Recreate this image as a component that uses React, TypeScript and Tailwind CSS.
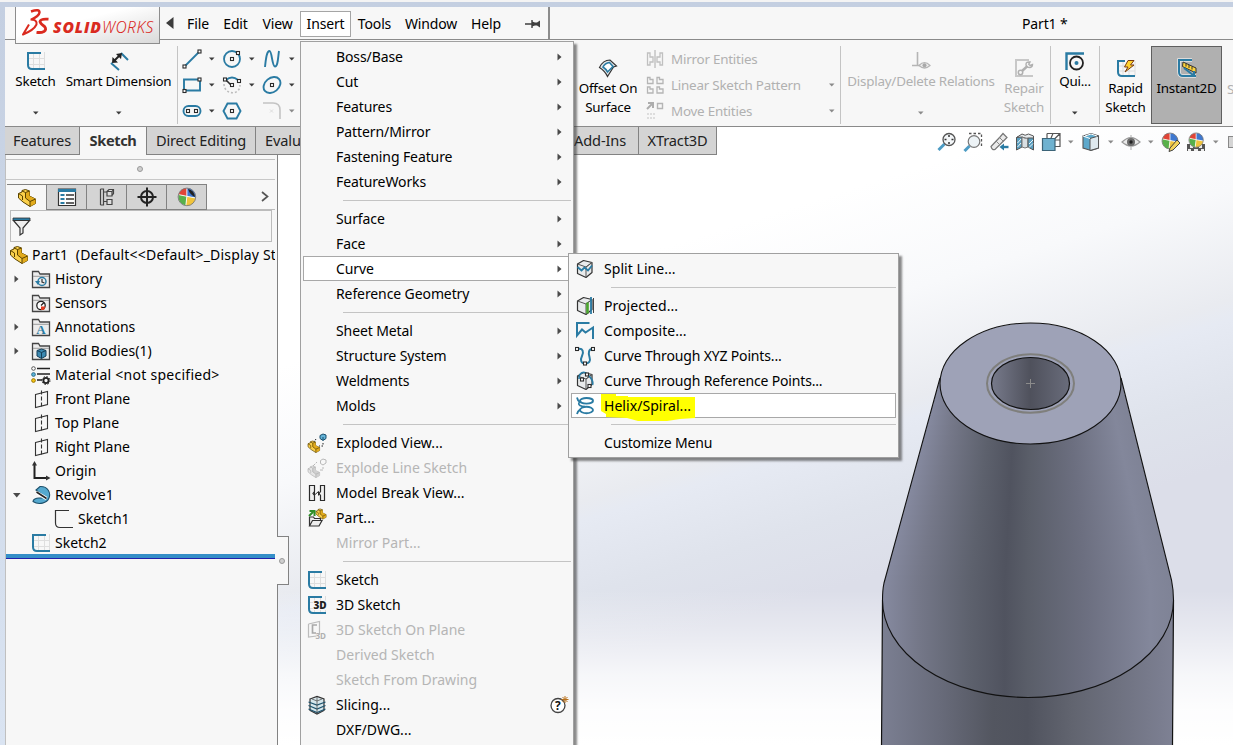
import React from "react";

type Kids = { children?: React.ReactNode };

const BLUE = "#2a7ba3";
const DARK = "#2b2b2b";

/* ---------- shared bits ---------- */

function Ico({ s = 20, children, className = "" }: Kids & { s?: number; className?: string }) {
  return (
    <svg width={s} height={s} viewBox="0 0 20 20" fill="none" className={`shrink-0 ${className}`}>
      {children}
    </svg>
  );
}

function Down({ dim = false, className = "" }: { dim?: boolean; className?: string }) {
  return (
    <svg width="6" height="4" viewBox="0 0 6 4" className={`shrink-0 ${className}`}>
      <path d="M0 0.5h5.500L2.750 3.500z" fill={dim ? "#8a8a8a" : "#3c3c3c"} />
    </svg>
  );
}

function Right({ className = "" }: { className?: string }) {
  return (
    <svg width="5" height="8" viewBox="0 0 5 8" className={`shrink-0 ${className}`}>
      <path d="M0.500 0.500v7L4.500 4z" fill="#4a4a4a" />
    </svg>
  );
}

const Sq = ({ x, y, c = DARK, f = "#fff" }: { x: number; y: number; c?: string; f?: string }) => (
  <rect x={x - 1.5} y={y - 1.5} width="3" height="3" fill={f} stroke={c} strokeWidth="1.1" />
);

/* ---------- icons ---------- */

function SketchIcon({ label = false }: { label?: boolean }) {
  return (
    <Ico>
      <path d="M7.500 1v18M13.500 1v18M18.500 1v18M1 7.500h18M1 13.500h18" stroke="#dedede" />
      <path d="M15 2H2v12q0 4 4 4h13" stroke={BLUE} strokeWidth="2" />
      {label && (
        <>
          <rect x="6" y="5.500" width="14" height="9.500" fill="#f7f7f7" />
          <text x="6.500" y="14" fontSize="10" fontWeight="800" letterSpacing="0" fill="#222" fontFamily="Open Sans, sans-serif">3D</text>
        </>
      )}
    </Ico>
  );
}

const Cube = ({ t = 0, u = 0, k = 1, a = "#fbd04a", b = "#e2ab1c", c = "#5a4300" }) => (
  <g transform={`translate(${t} ${u}) scale(${k})`} stroke={c} strokeWidth="1" strokeLinejoin="round">
    <path d="M1.500 10V5.500L5 4V2.500L8.500 1.500l4 1.500v5l6 3v4.500l-5.500 3-7-4.500z" fill={a} />
    <path d="M12.500 3v5l6 3v4.500l-5.500 3v-5L8 10V5z" fill={b} stroke="none" />
    <path d="M5 3l3.500 1.500 4-1.500M8.500 4.500V10l4.500 3.500 5.500-2.500M13 13.500v5M1.500 5.500l4 2.500V12" fill="none" />
  </g>
);

const PartIcon = () => <Ico><Cube /></Ico>;

const Folder = ({ children }: Kids) => (
  <Ico>
    <path d="M1.500 18.500V2.500h6l1.500 2.500h9.500v13.500z" fill="#ececec" stroke="#444" strokeWidth="1.300" />
    <path d="M2 7.300h16" stroke="#888" strokeWidth=".8" />
    {children}
  </Ico>
);

const PlaneIcon = () => (
  <Ico>
    <path d="M4.500 5.500l12-3v13l-12 3z" stroke="#333" strokeWidth="1.100" />
    <path d="M10.500 1.500v18" stroke="#333" strokeDasharray="4 2" strokeWidth="1.100" />
  </Ico>
);

const BoxIcon = ({ children }: Kids) => (
  <Ico>
    <path d="M2.500 5l6-3.500 8.500 2v10L11 18.500l-8.500-4z" fill="#e9ebec" stroke="#333" strokeWidth="1.200" strokeLinejoin="round" />
    <path d="M2.500 5L11 8l6-4.500L11 8v10.500" stroke="#555" strokeWidth="1" />
    {children}
  </Ico>
);

const icons: Record<string, React.ReactNode> = {
  split: (
    <BoxIcon>
      <path d="M2.500 8l4 3.500 3-3 3.500 3 4-5" stroke={BLUE} strokeWidth="1.800" />
    </BoxIcon>
  ),
  projected: (
    <BoxIcon>
      <path d="M12.500 6.500v11" stroke="#4aa52c" strokeWidth="2.600" />
      <path d="M16 1v17" stroke={BLUE} strokeWidth="1.800" />
      <path d="M18.500 2v15" stroke="#444" />
    </BoxIcon>
  ),
  composite: <Ico><path d="M14.500 2H2v12.500L7 8.500l3.500 3L18 6.500V18" stroke={BLUE} strokeWidth="2" /></Ico>,
  xyz: (
    <Ico>
      <path d="M3 3c5-1 6 3 4 7s-1 7.500 3 7.500 6-2 4.500-6.500S14 3 17 3" stroke={BLUE} strokeWidth="2" />
      <Sq x={2} y={3} /><Sq x={18} y={3} /><Sq x={10} y={17.5} />
    </Ico>
  ),
  ref: (
    <BoxIcon>
      <path d="M4 8C4 1 9 0 12 3s7 6 5.500 11" stroke={BLUE} strokeWidth="1.600" />
      <Sq x={7} y={8.500} /><Sq x={12} y={3.500} /><Sq x={14.5} y={15} />
    </BoxIcon>
  ),
  helix: (
    <Ico>
      <path d="M2 1.500q.5 3 3 4.500M2 18q.5-2.500 3-4.500" stroke={BLUE} strokeWidth="1.800" />
      <ellipse cx="11.500" cy="4.800" rx="6.500" ry="2.800" stroke={BLUE} strokeWidth="1.900" />
      <path d="M5 5.500Q2.500 8 5 9.500q1.500 1 5 1" stroke={BLUE} strokeWidth="1.700" />
      <ellipse cx="11.500" cy="14" rx="6.500" ry="3.200" stroke={BLUE} strokeWidth="1.900" />
    </Ico>
  ),
  exploded: (
    <Ico>
      <Cube u={7} k={0.68} />
      <path d="M13 2.500l3-1.500 3 1v3.500l-3 2-3-2zM16 4v3" fill="#63b3d8" stroke="#194f6d" />
      <path d="M9 6l-2 3M16 10v3h-4" stroke="#222" strokeDasharray="1.500 1.500" />
    </Ico>
  ),
  explodeLine: (
    <Ico>
      <Cube u={7} k={0.68} a="#e6e6e6" b="#d0d0d0" c="#b0b0b0" />
      <path d="M13.500 2.500l2.500-1.500 3 1v3l-3 2-2.500-1.500z" stroke="#b8b8b8" />
      <path d="M6 8l4-4M13 12h3V9" stroke="#b8b8b8" strokeDasharray="3 1" />
    </Ico>
  ),
  modelBreak: (
    <Ico>
      <path d="M2.500 2.500h5v6l-1.500 2 1.500 2v5h-5zM17.500 2.500h-4v6l-1.500 2 1.500 2v5h4z" stroke={DARK} strokeWidth="1.200" fill="#f0f0f0" />
      <path d="M7.500 8.500v3.500l4-3.500v4" stroke={DARK} />
    </Ico>
  ),
  part: (
    <Ico>
      <path d="M2.500 18V9h4l1 1.500h6V13M2.500 18l3-5.500H15L12 18z" fill="#eee" stroke="#333" strokeWidth="1.200" />
      <Cube t={8} u={0} k={0.6} />
      <path d="M2 8l4-4M2.500 3h5v5" stroke="#2f8f28" strokeWidth="2" />
    </Ico>
  ),
  sketch: <SketchIcon />,
  sketch3d: <SketchIcon label />,
  onPlane: (
    <Ico>
      <path d="M1.500 4l11-2.500v13M1.500 4v13l8-1" stroke="#bcbcbc" strokeWidth="1.200" />
      <path d="M10 5H5.500v8H9" stroke="#a9a9a9" strokeWidth="1.700" />
      <text x="8.500" y="19" fontSize="8" fontWeight="700" fill="#b0b0b0" fontFamily="Open Sans, sans-serif">3D</text>
    </Ico>
  ),
  slicing: (
    <Ico>
      <path d="M3 4l7-2.500L17 4v11.500L10 19l-7-3.500z" fill="#d6e6ec" stroke="#333" strokeWidth="1.200" />
      <path d="M1.500 7l8.500 3 8.500-3M1.500 10.500L10 14l8.500-3.500M1.500 14l8.500 3.500 8.500-3.500" stroke="#1e536d" strokeWidth="1.200" />
      <path d="M5 4l5 2 5-2M10 2v16" stroke="#555" strokeWidth=".8" />
    </Ico>
  ),
};

/* ---------- title / menu bar ---------- */

function Logo() {
  return (
    <div className="absolute left-[10px] top-0 z-20 flex h-[37px] w-[145px] items-start border border-t-0 border-[#8d8d8d] bg-linear-to-br from-white from-40% to-[#dadada]">
      <svg width="29" height="30" viewBox="0 0 29 30" fill="none" className="ml-[5px] mt-px shrink-0">
        <path d="M10 3.500Q18.500.5 18.500 4.500 18 8 10.500 11.500" stroke="#da2a1f" strokeWidth="2.400" />
        <path d="M9.500 11.500Q16.500 11.500 15.500 16.500 13 22 2 26.500L8 16.500" stroke="#da2a1f" strokeWidth="2" strokeLinejoin="round" />
        <path d="M27.500 11.200Q19.500 10.500 19 13.500q.2 2 4.500 5 2.500 3-.5 5-3 1.500-7.500.8" stroke="#da2a1f" strokeWidth="2.800" />
      </svg>
      <div className="mt-[9px] ml-[3px] flex text-[15.600px] leading-[22px] text-[#da2a1f] italic">
        <span className="w-[49px] font-['Open_Sans',sans-serif] font-extrabold tracking-[0.9px]">SOLID</span>
        <span className="font-light tracking-[0.45px]">WORKS</span>
      </div>
    </div>
  );
}

const menus: [string, string][] = [
  ["File", "w-9"], ["Edit", "w-[39px]"], ["View", "w-[45px]"], ["Insert", "w-[51px]"],
  ["Tools", "w-[47px]"], ["Window", "w-[66px]"], ["Help", "w-[44px]"],
];

function MenuBar() {
  return (
    <header className="relative flex h-[33px] border-b border-[#8a8a8a] bg-[#f7f7f7]">
      <Logo />
      <div className="flex h-8 w-[545px] items-center border-r-2 border-[#8c8c8c] pl-[161px]">
        <svg width="8" height="12" viewBox="0 0 8 12"><path d="M7.500 0v12L0 6z" fill="#3c3c3c" /></svg>
        <div className="w-[6px]" />
        {menus.map(([m, w]) => (
          <div key={m} className={`${w} mt-[2px] flex h-[26px] items-center justify-center ${m === "Insert" ? "border border-[#a5a5a5] bg-white" : ""}`}>
            {m}
          </div>
        ))}
        <svg width="16" height="10" viewBox="0 0 16 10" className="mt-[2px] ml-[17px]">
          <path d="M0 5h7M7 1v8" stroke="#3f3f3f" strokeWidth="1.400" />
          <path d="M7 2.500l3 1h2l3-2v7l-3-2h-2l-3 1z" fill="#3f3f3f" />
        </svg>
      </div>
      <div className="ml-[472px] flex h-[34px] items-center">Part1 *</div>
    </header>
  );
}

/* ---------- ribbon ---------- */

const Divider = () => <div className="mt-[6px] h-[78px] w-px shrink-0 bg-[#c4c4c4]" />;

function BigTool({ w, icon, lines, low = false, drop = false, dim = false }: {
  w: string; icon: React.ReactNode; lines: string[]; low?: boolean; drop?: boolean; dim?: boolean;
}) {
  return (
    <div className={`${w} flex h-[86px] shrink-0 flex-col items-center whitespace-nowrap ${low ? "pt-[18px]" : "pt-[11px]"} ${dim ? "text-[#b1b1b1]" : "text-black"}`}>
      {icon}
      <div className="mt-px text-center leading-[19px]">
        {lines.map((l) => <div key={l}>{l}</div>)}
      </div>
      {drop && <Down dim={dim} className="mt-[20px]" />}
    </div>
  );
}

const smallTools: { i: React.ReactNode; d?: "dark" | "dim" | "none" }[] = [
  { i: <Ico><path d="M2 18L17 3" stroke={BLUE} strokeWidth="1.800" /><Sq x={2.5} y={17.5} /><Sq x={17.500} y={2.500} /></Ico> },
  { i: <Ico><circle cx="10" cy="10" r="8" stroke={BLUE} strokeWidth="1.800" /><Sq x={10} y={10} /><Sq x={16} y={4} /></Ico> },
  { i: <Ico><path d="M3 18C4 8 5 2 7.500 2S10 17.500 13 17.500 16 8 17 2" stroke={BLUE} strokeWidth="1.900" /></Ico> },
  { i: <Ico><path d="M2 4.500h16v11H2z" stroke={BLUE} strokeWidth="1.900" /><Sq x={2.500} y={16} /><Sq x={17.500} y={4.500} /></Ico> },
  { i: <Ico><path d="M4 5q6-5 12 0" stroke={BLUE} strokeWidth="1.900" /><path d="M2 9c0 11 16 12 16 1" stroke="#bdbdbd" strokeWidth="1.600" strokeDasharray="2 2" /><path d="M4 5l5 5" stroke={DARK} strokeWidth="1.600" /><Sq x={3} y={4.500} /><Sq x={17} y={6} /><Sq x={10} y={10} /></Ico> },
  { i: <Ico><ellipse cx="10" cy="10" rx="9.300" ry="7" transform="rotate(-40 10 10)" stroke={BLUE} strokeWidth="1.900" /><Sq x={10} y={10} /></Ico> },
  { i: <Ico><rect x="1.500" y="5" width="17" height="10" rx="5" stroke={BLUE} strokeWidth="1.900" /><Sq x={6} y={10} /><Sq x={14} y={10} /></Ico> },
  { i: <Ico><path d="M5.500 2.500h9L18.500 10l-4 7.500h-9L1.500 10z" stroke={BLUE} strokeWidth="1.900" /><Sq x={10} y={10} /></Ico>, d: "none" },
  { i: <Ico><path d="M1 2h10q7 0 7 7v9" stroke="#c4c4c4" strokeWidth="1.600" /><path d="M8 8.500l3 3m0-3l-3 3" stroke="#ddd" /></Ico>, d: "dim" },
];

const patternTools: [string, React.ReactNode, boolean][] = [
  ["Mirror Entities", <Ico key="a"><path d="M10 1v18" stroke="#aaa" /><path d="M2.500 4H5v4h3v5H5v3H2.500zM17.500 4H15v4h-3v5h3v3h2.500z" stroke="#c0c0c0" strokeWidth="1.300" /></Ico>, false],
  ["Linear Sketch Pattern", <Ico key="b"><path d="M2.500 2.500H5v2h3v4H2.500zM12 2.500h2.500v2H18v4h-6zM2.500 12H5v2h3v4H2.500zM12 12h2.500v2H18v4h-6z" stroke="#b5b5b5" strokeWidth="1.300" /></Ico>, true],
  ["Move Entities", <Ico key="c"><path d="M2 8l6-6M3 2h5v5" stroke="#adadad" strokeWidth="2" /><path d="M12.500 2.500h5v5h-5z" stroke="#b5b5b5" strokeWidth="1.400" /><path d="M2 13h8M2 17h8" stroke="#ddd" strokeWidth="2" strokeDasharray="2 1" /></Ico>, true],
];

function Ribbon() {
  return (
    <div className="flex h-[87px] overflow-hidden border-b border-[#8a8a8a] bg-[#f7f7f7] text-[13.400px] tracking-[-0.22px]">
      <BigTool w="w-[61px]" lines={["Sketch"]} drop icon={<SketchIcon />} />
      <BigTool
        w="w-[105px]" lines={["Smart Dimension"]} drop
        icon={
          <Ico>
            <path d="M2 12l8 7M12 2l7 7" stroke={BLUE} strokeWidth="2" />
            <path d="M5 10l5.500-5.500" stroke="#222" strokeWidth="2" />
            <path d="M3 12l.5-6 5.500 5.500zM13 2L7 3l5 5z" fill="#222" />
          </Ico>
        }
      />
      <div className="w-[6px] shrink-0" />
      <Divider />
      <div className="ml-1 mt-[6px] grid h-[78px] w-[120px] shrink-0 grid-cols-3 grid-rows-3">
        {smallTools.map((t, n) => (
          <div key={n} className="flex items-center gap-[7px]">
            {t.i}
            {t.d !== "none" && <Down dim={t.d === "dim"} />}
          </div>
        ))}
      </div>
      <div className="w-[273px] shrink-0" />
      <BigTool
        w="w-[66px]" low lines={["Offset On", "Surface"]}
        icon={
          <Ico>
            <path d="M1.500 9.500Q5 2 12 2l6.500 6-3 1-6 9.500Q7 13 1.500 9.500z" stroke="#333" strokeWidth="1.200" fill="#e3e6e8" />
            <path d="M5 9q2-4 6.500-4.500l3.500 4L9.500 14Q8 11 5 9z" stroke={BLUE} strokeWidth="1.600" fill="#fff" />
          </Ico>
        }
      />
      <div className="ml-1 mt-[6px] grid h-[78px] w-[196px] shrink-0 grid-rows-3 text-[#b1b1b1]">
        {patternTools.map(([t, i, d]) => (
          <div key={t} className="flex items-center">
            {i}
            <span className="ml-[6px] flex-1">{t}</span>
            {d && <Down dim className="mr-[6px]" />}
          </div>
        ))}
      </div>
      <div className="-ml-px"><Divider /></div>
      <BigTool
        w="w-[160px]" dim drop lines={["Display/Delete Relations"]}
        icon={
          <Ico>
            <path d="M6.500 1v13M1 14.500h9" stroke="#b5b5b5" strokeWidth="1.600" />
            <path d="M8 14.500q5.500-6 11 0-5.500 5-11 0z" stroke="#b5b5b5" fill="#eee" strokeWidth="1.200" /><circle cx="13.500" cy="14.200" r="2" fill="#a8a8a8" />
          </Ico>
        }
      />
      <BigTool
        w="w-[46px]" dim low lines={["Repair", "Sketch"]}
        icon={
          <Ico>
            <path d="M15 2H2v16h17" stroke="#c8c8c8" strokeWidth="2" />
            <path d="M7.500 13.500l6-5.500" stroke="#b0b0b0" strokeWidth="2.400" />
            <path d="M16.500 4l-2 2.500 1.500 1.500 2.500-1.500" stroke="#f7f7f7" strokeWidth="2" />
            <path d="M16 4q-4-.5-4 2.500t4 3q2.500-.5 2.500-3l-2.500 1-1.300-1.300z" stroke="#b0b0b0" strokeWidth="1.400" />
            <circle cx="6.500" cy="14.500" r="2.200" stroke="#b0b0b0" strokeWidth="1.500" fill="#f7f7f7" />
          </Ico>
        }
      />
      <div className="ml-[3px]"><Divider /></div>
      <BigTool
        w="w-[48px]" drop lines={["Qui..."]}
        icon={
          <Ico>
            <path d="M1.500 19V2.500H19" stroke={BLUE} strokeWidth="2.400" />
            <circle cx="11.500" cy="12" r="6.500" stroke="#222" strokeWidth="1.800" /><circle cx="11.500" cy="12" r="2" fill={BLUE} />
          </Ico>
        }
      />
      <Divider />
      <BigTool
        w="w-[51px]" low lines={["Rapid", "Sketch"]}
        icon={
          <Ico>
            <path d="M7 3v15M13 3v15M19 3v15M2 8h17M2 13h17" stroke="#ddd" />
            <path d="M9 3H2v11q0 4 4 4h13" stroke={BLUE} strokeWidth="2" />
            <path d="M12 2.500h6L14.500 7H18l-9 7 3-5H8.500z" fill="#ffd22e" stroke="#7a3b12" strokeWidth="1" />
          </Ico>
        }
      />
      <div className="mt-[6px] h-[78px] w-[71px] shrink-0 border border-[#5f5f5f] bg-[#b0b0b0]">
        <div className="-mt-[7px]">
          <BigTool
            w="w-[69px]" low lines={["Instant2D"]}
            icon={
              <Ico>
                <path d="M15 2H2v12q0 4 4 4h13" stroke="#e9e9e9" strokeWidth="3.500" />
                <path d="M15 2H2v12q0 4 4 4h13" stroke={BLUE} strokeWidth="2" />
                <path d="M6 4l13 6v5L5.500 8.500z" fill="#ffd43a" stroke="#333" />
                <path d="M9 5.500v3M12 7v3M15 8.500v3" stroke="#333" />
                <path d="M7 10l9 7M17 13v5h-5" stroke={BLUE} strokeWidth="2" />
              </Ico>
            }
          />
        </div>
      </div>
      <div className="ml-[5px] mt-[39px] text-[#b1b1b1]">S</div>
    </div>
  );
}

/* ---------- command tabs and view toolbar ---------- */

function CommandTabs() {
  const base = "flex h-7 shrink-0 items-center justify-center whitespace-nowrap border-r border-b border-[#828282] bg-[#d4d4d4] pb-px text-[#222]";
  return (
    <div className="flex h-7 text-[14.600px] leading-[18px] tracking-[-0.15px]">
      <div className={`${base} w-[75px]`}>Features</div>
      <div className="flex h-7 w-[66px] items-center justify-center bg-[#f7f7f7] pb-[2px] font-bold tracking-[-0.4px] text-[#333]">Sketch</div>
      <div className={`${base} w-[110px] border-l`}>Direct Editing</div>
      <div className={`${base} w-[312px] !justify-start pl-[9px]`}>Evaluate</div>
      <div className={`${base} w-[71px] !justify-end pr-[12px]`}>Add-Ins</div>
      <div className={`${base} w-[78px]`}>XTract3D</div>
    </div>
  );
}

const Ball = ({ k = 1 }: { k?: number }) => (
  <g transform={`scale(${k})`}>
    <circle cx="9" cy="9" r="8" fill="#fff" />
    <path d="M9 8.500L1.500 7A8 8 0 0 1 9 1z" fill="#e04436" />
    <path d="M9 8.500V1a8 8 0 0 1 8 9z" fill="#3f78cf" />
    <path d="M9 8.500L1.500 7A8 8 0 0 0 8 17z" fill="#58b04a" />
    <path d="M9 8.500L8 17a8 8 0 0 0 9-7z" fill="#f1c43b" />
    <path d="M2 7l7 1.500 8 1.500M9 1v7.500L8 17" stroke="#fff" strokeWidth=".8" fill="none" />
    <circle cx="9" cy="9" r="8" fill="none" stroke="#777" strokeWidth=".8" />
  </g>
);

function ViewToolbar() {
  return (
    <div className="flex h-[30px] items-center">
      <Ico><path d="M1.500 18l6-6" stroke="#4d9cc4" strokeWidth="3" /><circle cx="12" cy="7.500" r="6" fill="#f3f6f8" stroke="#555" strokeWidth="1.300" /><path d="M12 3v2M12 10v2M7.500 7.500h2M14.500 7.500h2" stroke="#333" strokeWidth="1.500" /></Ico>
      <Ico className="ml-[6px]"><path d="M6 1.500h12.500V15" stroke="#555" strokeDasharray="2.500 2" strokeWidth="1.300" /><path d="M1.500 19l5-5" stroke="#4d9cc4" strokeWidth="3" /><circle cx="11" cy="9.500" r="5.800" fill="#edf3f6" stroke="#777" strokeWidth="1.200" /></Ico>
      <Ico className="ml-[6px]"><path d="M2 14.500L11 5l3-3.500 4 4-3 3-9 9q-3 1-4-3z" fill="#eaeaea" stroke="#777" strokeWidth="1.200" /><path d="M10.500 5.500l4 4M7 9l4 4" stroke="#888" /><path d="M19.500 15H14" stroke={BLUE} strokeWidth="2.400" /><path d="M10.500 15l4.500-3.500v7z" fill={BLUE} /></Ico>
      <Ico className="ml-[6px]"><path d="M1.500 5.500L7 3v12l-5.500 3z" fill="#5a9fc0" stroke="#555" /><path d="M1.500 5.500L7 2q3 2.500 6.500 0l5 2v3H13l-6-2z" fill="#e6eaec" stroke="#555" /><path d="M7 5q3 2 6 1v9q-3 2-6 0z" fill="#d9dfe2" stroke="#777" /><path d="M13 6h5.500v12L13 15z" fill="#5a9fc0" stroke="#555" /><path d="M2.500 11l3.500-4M2.500 15l3.500-4M14 12l4-4M14 15.500l4-4" stroke="#fff" strokeWidth=".9" /></Ico>
      <Ico className="ml-[6px]"><path d="M6 1.500h13v13h-5M6 1.500v5M12 1.500L10 6M19 1.500L14 6.500M14 8h5" stroke="#555" strokeWidth="1.200" /><path d="M1.500 6.500h12.500v12H1.500z" fill="#6fb2d0" stroke="#3c6478" strokeWidth="1.200" /></Ico>
      <Down dim className="ml-[7px]" />
      <Ico className="ml-[7px]"><path d="M2 4l8-2.500 7.500 2.500v12L10 18.500 2 16z" fill="#5da8cb" stroke="#555" strokeWidth="1.100" /><path d="M9 6.500L17.500 4v12L9 18.500z" fill="#dfe9ee" stroke="#555" /><path d="M2 4l7 2.500M4 4l6-2 6 2" stroke="#fff" /></Ico>
      <Down dim className="ml-[7px]" />
      <Ico className="ml-[7px]"><path d="M1 10q9-9 18 0-9 8-18 0z" fill="#e9e9e9" stroke="#999" strokeWidth="1.200" /><circle cx="10" cy="10" r="4" fill="#6b6b6b" /><circle cx="10" cy="10" r="1.700" fill="#222" /><path d="M10 3v3M10 15v3" stroke="#aaa" /></Ico>
      <Down dim className="ml-[7px]" />
      <Ico className="ml-[7px]"><Ball /><path d="M9 16l7-8 3 3-7 7-4 1.500z" fill="#f4d35b" stroke="#444" strokeWidth="1" /></Ico>
      <Ico className="ml-[5px]"><path d="M1 12h18v7H1z" fill="#555" /><path d="M2 17h3v2H2zM8 17h4v2H8zM15 17h3v2h-3zM4 13h3v3H4zM13 13h3v3h-3z" fill="#eee" /><g transform="translate(2 0)"><Ball k={0.9} /></g></Ico>
      <Down dim className="ml-[7px]" />
      <div className="ml-[9px] h-3 w-5 border border-[#888] bg-[#d5d5d5]" />
    </div>
  );
}

/* ---------- feature tree ---------- */

type Node = { t: string; i: React.ReactNode; a?: "r" | "d"; lvl?: number; wide?: boolean };
const tree: Node[] = [
  { t: "History", a: "r", i: <Folder><circle cx="11" cy="12.500" r="4" stroke={BLUE} strokeWidth="1.500" /><path d="M11 10v3l2.500 1" stroke="#333" strokeWidth="1.200" /><path d="M4 12l3 4 2-4z" fill={BLUE} /></Folder> },
  { t: "Sensors", i: <Folder><circle cx="10" cy="12.500" r="4.200" stroke="#222" strokeWidth="1.300" fill="#fff" /><path d="M10 12.500l3-3" stroke="#222" strokeWidth="1.300" /><path d="M10 13.500h4.500l-1.500 3.500h-3z" fill="#e03a20" /></Folder> },
  { t: "Annotations", a: "r", i: <Folder><text x="5.200" y="17" fontSize="13" fontWeight="700" fill={BLUE} fontFamily="Liberation Serif, serif">A</text></Folder> },
  { t: "Solid Bodies(1)", a: "r", i: <Folder><path d="M6 9.500l4.500-1.500L15 9.500v5.500l-4.500 2.500L6 15z" fill="#3d8ab2" stroke="#153f58" /><path d="M6 9.500l4.500 2 4.500-2M10.500 11.500v6" stroke="#153f58" /></Folder> },
  { t: "Material <not specified>", wide: true, i: <Ico><path d="M6 3.500h13M6 9h13M6 15h5" stroke="#222" strokeWidth="1.700" /><circle cx="2.500" cy="3.500" r="1.800" stroke="#555" fill="#fff" /><circle cx="2.500" cy="9.500" r="1.900" fill="#58b0d6" stroke="#28637f" strokeWidth=".8" /><circle cx="2.500" cy="15.500" r="1.900" fill="#f3c211" stroke="#8a6a00" strokeWidth=".8" /><circle cx="15" cy="15.500" r="2.600" stroke="#222" strokeWidth="1.900" /><circle cx="15" cy="15.500" r="4" stroke="#222" strokeDasharray="1.500 1.640" /></Ico> },
  { t: "Front Plane", i: <PlaneIcon /> },
  { t: "Top Plane", i: <PlaneIcon /> },
  { t: "Right Plane", i: <PlaneIcon /> },
  { t: "Origin", i: <Ico><path d="M3.500 3v14H17" stroke="#222" strokeWidth="2" /><path d="M3.500 0l2.500 4.500H1zM19.500 17L15 14.500v5z" fill="#333" /></Ico> },
  { t: "Revolve1", a: "d", i: <Ico><path d="M9 1.500C17 1 20 8 18 13S8 20.500 2 16.500c0-2 3-3.500 6-3.500h3C13 10.500 9 8 5 5z" fill="#55a9cf" stroke="#1d506b" strokeWidth="1.100" /><path d="M5.500 7.500l10 6" stroke="#fff" strokeWidth="3.400" /><path d="M5.500 7l10 6.500" stroke="#222" strokeWidth="1.500" /></Ico> },
  { t: "Sketch1", lvl: 1, i: <Ico><path d="M15 1.500H1.500V14q0 4.500 4.500 4.500h13" stroke="#333" strokeWidth="1.200" /></Ico> },
  { t: "Sketch2", i: <SketchIcon /> },
];

function PanelTabs() {
  const tab = "flex h-[26px] w-10 items-center justify-center border-t border-r border-b border-[#828282] bg-[#d4d4d4]";
  return (
    <div className="flex h-[26px] pl-px">
      <div className="flex h-[26px] w-10 items-center justify-center border-t border-r border-[#828282] pl-px"><PartIcon /></div>
      <div className={tab}><Ico><path d="M1.500 2h17v16.500h-17z" fill="#fff" stroke="#333" strokeWidth="1.200" /><path d="M1 3.500h18" stroke={BLUE} strokeWidth="3" /><path d="M3.500 8h4M3.500 12h4M3.500 16h4" stroke={BLUE} strokeWidth="2.200" /><path d="M9 8h8M9 12h8M9 16h8" stroke="#333" strokeWidth="1.300" /></Ico></div>
      <div className={tab}><Ico><path d="M3.500 2v16M3.500 2h3v16h-3M6.500 5H11M6.500 14.500H11" stroke="#444" strokeWidth="1.200" /><path d="M10 4.500h5v4.500h-5zM10 12.500h5v5h-5zM10 4.500l2-2h4.500v4L15 8.500M15 4.500l1.500-2" stroke="#444" strokeWidth="1.200" fill="#ddd" /></Ico></div>
      <div className={tab}><Ico><circle cx="10" cy="10" r="6" stroke="#222" strokeWidth="2" /><path d="M10 .5v19M.5 10h19" stroke="#222" strokeWidth="2" /></Ico></div>
      <div className={tab}><Ico><Ball k={1.1} /><path d="M11 2q6 1 7 8-5-2-7-8z" fill="#222" /></Ico></div>
      <div className="flex h-[26px] flex-1 items-center justify-end border-b border-[#bcbcbc] pr-[6px]">
        <svg width="8" height="11" viewBox="0 0 8 11" fill="none"><path d="M1 1l5.500 4.500L1 10" stroke="#555" strokeWidth="1.700" /></svg>
      </div>
    </div>
  );
}

function Sidebar() {
  return (
    <aside className="relative flex h-[590px] w-[273px] shrink-0 flex-col border-r border-l border-r-[#828282] border-l-[#c0c0c0] bg-[#f7f7f7]">
      <div className="w-[269px]">
        <div className="h-[5px] border-b border-[#c0c0c0]" />
        <div className="flex h-5 items-center justify-center border-b border-[#c8c8c8] pr-[2px] pb-px">
          <div className="h-[6px] w-[6px] rounded-full border border-[#9a9a9a] bg-[#cfcfcf]" />
        </div>
        <div className="h-[4px]" />
        <PanelTabs />
        <div className="ml-1 flex h-[32px] w-[262px] items-center border border-[#bcbcbc] pl-px">
          <Ico><path d="M1 2h17v2.500H1z" fill={BLUE} stroke="#333" strokeWidth=".8" /><path d="M1.500 4.500L8 12v7l3-2v-5l6.500-7.500z" fill="#eee" stroke="#333" strokeWidth="1.200" /></Ico>
        </div>
        <div className="mt-px flex h-6 items-center overflow-hidden pl-[3px] tracking-[0.19px] whitespace-pre">
          <PartIcon />
          <span className="ml-[3px]">Part1&nbsp; (Default&lt;&lt;Default&gt;_Display St</span>
        </div>
        {tree.map((n) => (
          <div key={n.t} className={`flex h-6 items-center ${n.lvl ? "pl-[31px]" : "pl-[8px]"}`}>
            <div className="flex w-[17px] shrink-0">
              {n.a === "r" && <Right />}
              {n.a === "d" && <svg width="8" height="5" viewBox="0 0 8 5" className="-ml-px"><path d="M0 0h7.500L3.750 4.500z" fill="#4a4a4a" /></svg>}
            </div>
            {n.i}
            <span className={`ml-[4px] whitespace-nowrap ${n.wide ? "tracking-[0.26px]" : "tracking-[0.02px]"}`}>{n.t}</span>
          </div>
        ))}
        <div className="-mt-px h-[5px] border-b border-[#2222aa] bg-[#358fc8]" />
      </div>
      <div className="absolute top-[381px] left-[271px] z-10 flex h-[49px] w-[12px] items-center border border-l-0 border-[#828282] bg-[#f7f7f7]">
        <div className="ml-[2px] h-[6px] w-[6px] rounded-full border border-[#9a9a9a] bg-[#cfcfcf]" />
      </div>
    </aside>
  );
}

/* ---------- model ---------- */

const slices = Array.from({ length: 66 }, (_, n) => {
  const y = 370 + n * 5;
  const p = Math.max(0, Math.min(1, (y + 2.5 - 378) / 207));
  const l = 940 - 57.5 * p;
  const r = 1121 + 52.5 * p;
  return { y, l, w: r - l };
});

function Viewport() {
  return (
    <svg width="955" height="618" viewBox="278 127 955 618" fill="none">
      <defs>
        <linearGradient id="sky" gradientUnits="userSpaceOnUse" x1="300" y1="360" x2="412" y2="720">
          <stop offset="0" stopColor="#fff" />
          <stop offset=".3" stopColor="#f8f9fb" />
          <stop offset=".58" stopColor="#e9ebf0" />
          <stop offset=".63" stopColor="#e6eaf3" />
          <stop offset=".82" stopColor="#dfe3ec" />
          <stop offset="1" stopColor="#dcdee9" />
        </linearGradient>
        <linearGradient id="floor" gradientUnits="userSpaceOnUse" x1="0" y1="590" x2="0" y2="745">
          <stop offset="0" stopColor="#fff" stopOpacity="0" />
          <stop offset=".28" stopColor="#fff" stopOpacity=".35" />
          <stop offset=".55" stopColor="#fff" stopOpacity=".75" />
          <stop offset=".78" stopColor="#fff" stopOpacity=".94" />
          <stop offset="1" stopColor="#fff" stopOpacity="1" />
        </linearGradient>
        <linearGradient id="cone">
          <stop offset="0" stopColor="#868aa0" />
          <stop offset=".12" stopColor="#757889" />
          <stop offset=".3" stopColor="#5d616d" />
          <stop offset=".42" stopColor="#50535f" />
          <stop offset=".5" stopColor="#5a5e69" />
          <stop offset=".7" stopColor="#6c6f80" />
          <stop offset=".92" stopColor="#83879b" />
          <stop offset="1" stopColor="#7f8396" />
        </linearGradient>
        <linearGradient id="body">
          <stop offset="0" stopColor="#7b7f92" />
          <stop offset=".2" stopColor="#686b7a" />
          <stop offset=".38" stopColor="#535660" />
          <stop offset=".5" stopColor="#50535e" />
          <stop offset=".65" stopColor="#61646f" />
          <stop offset="1" stopColor="#7e8194" />
        </linearGradient>
        <linearGradient id="hole">
          <stop offset="0" stopColor="#777a8b" />
          <stop offset=".5" stopColor="#4f515c" />
          <stop offset="1" stopColor="#696c7b" />
        </linearGradient>
        <clipPath id="coneClip">
          <path d="M940 378L884 583Q882.500 590 882.500 600A145.500 97.500 0 0 0 1173.500 600Q1173.500 590 1171.500 580L1121 378z" />
        </clipPath>
      </defs>
      <path d="M278 127h955v618H278z" fill="url(#sky)" />
      <path d="M278 590h955v155H278z" fill="url(#floor)" />
      <path d="M882.500 600L881.500 745H1172.500L1173.500 600z" fill="url(#body)" />
      <path d="M882.500 600L881.500 745M1173.500 600L1172.500 745" stroke="#111" strokeWidth="1.200" />
      <g clipPath="url(#coneClip)">
        {slices.map((s) => <rect key={s.y} x={s.l} y={s.y} width={s.w} height="5" fill="url(#cone)" />)}
      </g>
      <path d="M940 378L884 583Q882.500 590 882.500 600A145.500 97.500 0 0 0 1173.500 600Q1173.500 590 1171.500 580L1121 378" stroke="#111" strokeWidth="1.100" />
      <ellipse cx="1030.500" cy="383.500" rx="90.500" ry="60.500" fill="#9ea2b7" stroke="#111" strokeWidth="1.100" />
      <ellipse cx="1030.500" cy="383.500" rx="43.500" ry="29.200" stroke="#7f7f7c" strokeWidth="2" />
      <ellipse cx="1030.500" cy="383.500" rx="39" ry="26" fill="url(#hole)" stroke="#111" strokeWidth="1.200" />
      <path d="M1026 383.500h9M1030.500 379v9" stroke="#8b8b8b" />
    </svg>
  );
}

/* ---------- menus ---------- */

type Item = { t: string; i?: string; sub?: boolean; dim?: boolean; on?: boolean; help?: boolean; mark?: boolean } | null;

const s = (t: string): Item => ({ t, sub: true });
const insertMenu: Item[] = [
  s("Boss/Base"), s("Cut"), s("Features"), s("Pattern/Mirror"), s("Fastening Feature"), s("FeatureWorks"), null,
  s("Surface"), s("Face"), { t: "Curve", sub: true, on: true }, s("Reference Geometry"), null,
  s("Sheet Metal"), s("Structure System"), s("Weldments"), s("Molds"), null,
  { t: "Exploded View...", i: "exploded" }, { t: "Explode Line Sketch", i: "explodeLine", dim: true },
  { t: "Model Break View...", i: "modelBreak" }, { t: "Part...", i: "part" }, { t: "Mirror Part...", dim: true }, null,
  { t: "Sketch", i: "sketch" }, { t: "3D Sketch", i: "sketch3d" }, { t: "3D Sketch On Plane", i: "onPlane", dim: true },
  { t: "Derived Sketch", dim: true }, { t: "Sketch From Drawing", dim: true },
  { t: "Slicing...", i: "slicing", help: true }, { t: "DXF/DWG..." },
];
const curveMenu: Item[] = [
  { t: "Split Line...", i: "split" }, null,
  { t: "Projected...", i: "projected" }, { t: "Composite...", i: "composite" }, { t: "Curve Through XYZ Points...", i: "xyz" },
  { t: "Curve Through Reference Points...", i: "ref" }, { t: "Helix/Spiral...", i: "helix", on: true, mark: true }, null,
  { t: "Customize Menu" },
];

function Menu({ items, className }: { items: Item[]; className: string }) {
  return (
    <div className={`absolute border border-[#a0a0a0] bg-[#f7f7f7] px-[2px] pt-[2px] shadow-[3px_3px_2px_0px_rgba(60,60,60,0.6)] ${className}`}>
      {items.map((m, n) =>
        m === null ? (
          <div key={n} className="flex h-3 items-center pl-10"><div className="h-px w-full bg-[#c4c4c4]" /></div>
        ) : (
          <div key={n} className={`flex h-[25px] items-center border pl-[3px] ${m.on ? "border-[#a8a8a8] bg-white" : "border-transparent"} ${m.dim ? "tracking-[0.03px] text-[#b5b5b5]" : "text-black"} ${m.t.endsWith("...") && !m.t.startsWith("Curve") ? "tracking-[0.05px]" : ""}`}>
            <div className="flex w-[29px] shrink-0">{m.i && icons[m.i]}</div>
            <div className="relative flex-1 whitespace-nowrap">
              {m.mark && (
                <svg width="95" height="28" viewBox="0 0 95 28" className="absolute -top-[2px] -left-[3px]">
                  <path d="M0 0h15v2h12v1h67v21l-15 1-13 2H37L26 24 5 23v-3l-5-3z" fill="#ffff00" />
                </svg>
              )}
              <span className="relative">{m.t}</span>
            </div>
            {m.sub && <Right className="mr-[8px]" />}
            {m.help && (
              <Ico className="mr-px">
                <circle cx="9" cy="10.500" r="7" stroke="#444" strokeWidth="1.300" fill="#fff" />
                <text x="6" y="15" fontSize="12" fontWeight="700" fill="#111" fontFamily="Open Sans, sans-serif">?</text>
                <path d="M16 1v7M12.500 4.500h7M13.500 2l5 5M18.500 2l-5 5" stroke="#b9711a" strokeWidth="1" />
              </Ico>
            )}
          </div>
        ),
      )}
    </div>
  );
}

export default function App() {
  return (
    <div className="relative h-[745px] w-[1233px] overflow-hidden border-t-2 border-[#f4f4f4] bg-linear-to-b from-[#c4cfe1] to-[#dae4f2] pt-[5px] pl-[5px] font-['Noto_Sans',sans-serif] text-[14px] leading-[20px] tracking-[-0.15px] text-black">
      <MenuBar />
      <Ribbon />
      <div className="relative h-[618px]">
        <div className="absolute top-0 left-[273px]"><Viewport /></div>
        <div className="relative flex h-7 items-start justify-between">
          <CommandTabs />
          <div className="absolute top-0 left-[932px]"><ViewToolbar /></div>
        </div>
        <Sidebar />
      </div>
      <Menu items={insertMenu} className="top-[39px] left-[300px] h-[730px] w-[274px] tracking-[-0.1px]" />
      <Menu items={curveMenu} className="top-[251px] left-[568px] h-[205px] w-[331px] tracking-[-0.16px]" />
    </div>
  );
}
